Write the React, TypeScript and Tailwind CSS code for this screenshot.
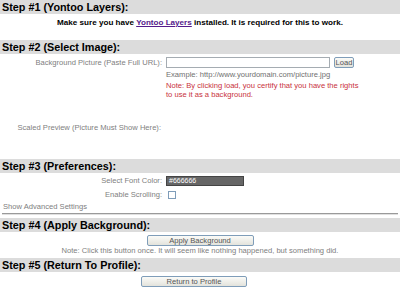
const Bar = ({ title }: { title: string }) => (
  <div className="h-[14px] bg-[#dcdcdc] pl-[2px] text-[10.8px] font-bold leading-[14px] text-black">
    {title}
  </div>
);

const Label = ({ children }: { children: React.ReactNode }) => (
  <div className="w-[163px] shrink-0 pr-[1px] text-right">{children}</div>
);

const Btn = ({ children, className }: { children: React.ReactNode; className: string }) => (
  <button
    className={`h-[11px] rounded-[2px] border border-[#7f9db9] bg-gradient-to-b from-[#fbfbf8] to-[#e3e3dc] text-[7.6px] leading-[9px] text-[#555] ${className}`}
  >
    {children}
  </button>
);

export default function App() {
  return (
    <div className="h-[294px] w-[400px] overflow-hidden bg-white font-['Liberation_Sans',Arial,sans-serif] text-[7.6px] text-[#808080]">
      <Bar title="Step #1 (Yontoo Layers):" />
      <p className="mt-[4px] h-[22px] text-center text-[8.1px] font-bold leading-[9px] text-black">
        Make sure you have{" "}
        <a href="#" className="text-[#551a8b] underline">
          Yontoo Layers
        </a>{" "}
        installed. It is required for this to work.
      </p>

      <Bar title="Step #2 (Select Image):" />
      <div className="mt-[3px] flex items-center leading-[11px]">
        <Label>Background Picture (Paste Full URL):</Label>
        <div className="ml-[3px] h-[11px] w-[164px] border border-[#a5acb2] bg-white" />
        <Btn className="ml-[4px] w-[20px]">Load</Btn>
      </div>
      <div className="ml-[166px] mt-[2px] leading-[9px] text-[#707070]">
        Example: http://www.yourdomain.com/picture.jpg
      </div>
      <div className="ml-[166px] mt-[2px] leading-[9px] text-[#c8323c]">
        Note: By clicking load, you certify that you have the rights
        <br />
        to use it as a background.
      </div>
      <div className="mt-[24px] flex h-[36px] leading-[9px]">
        <div className="w-[161px] text-right">Scaled Preview (Picture Must Show Here):</div>
      </div>

      <Bar title="Step #3 (Preferences):" />
      <div className="mt-[3px] flex items-center leading-[10px]">
        <Label>Select Font Color:</Label>
        <div className="ml-[3px] h-[10px] w-[78px] border border-[#444] bg-[#666666] pl-[2px] text-[7px] leading-[8px] text-white">
          #666666
        </div>
      </div>
      <div className="mt-[5px] flex items-center leading-[8px]">
        <Label>Enable Scrolling:</Label>
        <div className="ml-[5px] h-[8px] w-[8px] border border-[#7f9db9] bg-white" />
      </div>
      <div className="mt-[3px] pl-[3px] leading-[9px]">Show Advanced Settings</div>
      <div className="mx-[2px] mt-[2px] border-t border-b border-t-[#9a9a9a] border-b-[#e0e0e0]" />
      <div className="mt-[3px]">
        <Bar title="Step #4 (Apply Background):" />
      </div>
      <div className="mt-[3px] flex justify-center">
        <Btn className="w-[107px]">Apply Background</Btn>
      </div>
      <div className="text-center leading-[9px]">
        Note: Click this button once. It will seem like nothing happened, but something did.
      </div>
      <div className="mt-[3px]">
        <Bar title="Step #5 (Return To Profile):" />
      </div>
      <div className="mt-[4px] pl-[141px]">
        <Btn className="w-[106px]">Return to Profile</Btn>
      </div>
    </div>
  );
}
